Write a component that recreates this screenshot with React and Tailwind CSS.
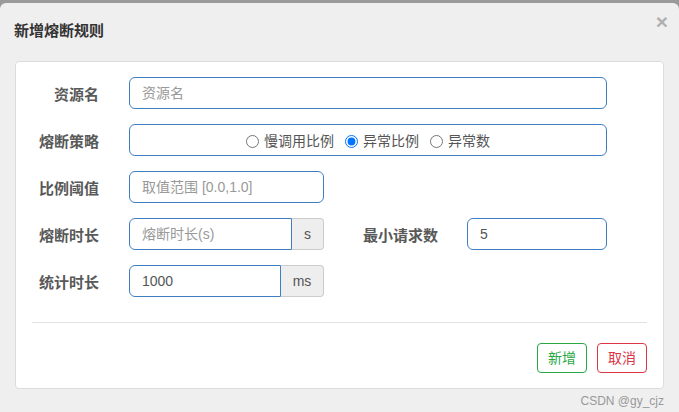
import React from "react";

const font = { fontFamily: '"Liberation Sans", "Noto Sans CJK SC", sans-serif' };

const Label = ({ children, className = "" }) => (
  <div className={"pt-[4px] text-[15px] font-bold text-[#595959] " + className}>{children}</div>
);

const inputCls =
  "h-[32px] border border-[#3f7fc1] bg-white px-3 text-[14px] text-[#555] placeholder:text-[#999] outline-none";

const App = () => {
  return (
    <div className="w-[679px] h-[412px] bg-[#9a9a9a] pt-[3px] overflow-hidden" style={font}>
      <div className="h-[409px] bg-[#efefef] rounded-t-[6px] relative flex flex-col">
        <div className="h-[58px] flex items-center pl-[14px] pb-[1px]">
          <h4 className="text-[15px] font-bold text-[#333]">新增熔断规则</h4>
        </div>
        <button className="absolute right-[11px] top-[8px] text-[21px] leading-none font-bold text-[#b0b0b0]">
          ×
        </button>

        <div className="mx-[15px] h-[328px] bg-white border border-[#dcdcdc] rounded-[4px] px-[16px] pt-[15px]">
          <div className="flex flex-col gap-[15px]">
            <div className="flex items-center">
              <Label className="w-[67px] text-right">资源名</Label>
              <input className={inputCls + " ml-[30px] w-[478px] rounded-[6px]"} placeholder="资源名" />
            </div>

            <div className="flex items-center">
              <Label className="w-[67px] text-right">熔断策略</Label>
              <div className="ml-[30px] w-[478px] h-[32px] border border-[#3f7fc1] rounded-[6px] flex items-center justify-center gap-[11px] pt-[2px] text-[14px] text-[#555]">
                <label className="flex items-center gap-[5px]">
                  <input type="radio" name="grade" className="w-[13px] h-[13px] m-0" />
                  慢调用比例
                </label>
                <label className="flex items-center gap-[5px]">
                  <input type="radio" name="grade" defaultChecked className="w-[13px] h-[13px] m-0" />
                  异常比例
                </label>
                <label className="flex items-center gap-[5px]">
                  <input type="radio" name="grade" className="w-[13px] h-[13px] m-0" />
                  异常数
                </label>
              </div>
            </div>

            <div className="flex items-center">
              <Label className="w-[67px] text-right">比例阈值</Label>
              <input className={inputCls + " ml-[30px] w-[195px] rounded-[6px]"} placeholder="取值范围 [0.0,1.0]" />
            </div>

            <div className="flex items-center">
              <Label className="w-[67px] text-right">熔断时长</Label>
              <div className="ml-[30px] flex w-[195px]">
                <input className={inputCls + " w-[163px] rounded-l-[6px]"} placeholder="熔断时长(s)" />
                <span className="h-[32px] w-[32px] flex items-center justify-center bg-[#eee] border border-[#ccc] border-l-0 rounded-r-[4px] text-[14px] text-[#555]">
                  s
                </span>
              </div>
              <Label className="ml-[39px] w-[77px]">最小请求数</Label>
              <input className={inputCls + " ml-[27px] w-[140px] rounded-[6px]"} defaultValue="5" />
            </div>

            <div className="flex items-center">
              <Label className="w-[67px] text-right">统计时长</Label>
              <div className="ml-[30px] flex w-[195px]">
                <input className={inputCls + " w-[152px] rounded-l-[6px]"} defaultValue="1000" />
                <span className="h-[32px] w-[43px] flex items-center justify-center bg-[#eee] border border-[#ccc] border-l-0 rounded-r-[4px] text-[14px] text-[#555]">
                  ms
                </span>
              </div>
            </div>
          </div>

          <div className="mt-[25px] border-t border-[#e2e2e2]" />

          <div className="mt-[20px] flex justify-end gap-[10px]">
            <button className="w-[50px] h-[30px] border border-[#28a745] rounded-[4px] text-[14px] text-[#28a745] bg-white">
              新增
            </button>
            <button className="w-[50px] h-[30px] border border-[#dc3545] rounded-[4px] text-[14px] text-[#dc3545] bg-white">
              取消
            </button>
          </div>
        </div>

        <div className="mt-[3px] pr-[15px] text-right text-[12px] text-[#999]">CSDN @gy_cjz</div>
      </div>
    </div>
  );
};

export default App;
